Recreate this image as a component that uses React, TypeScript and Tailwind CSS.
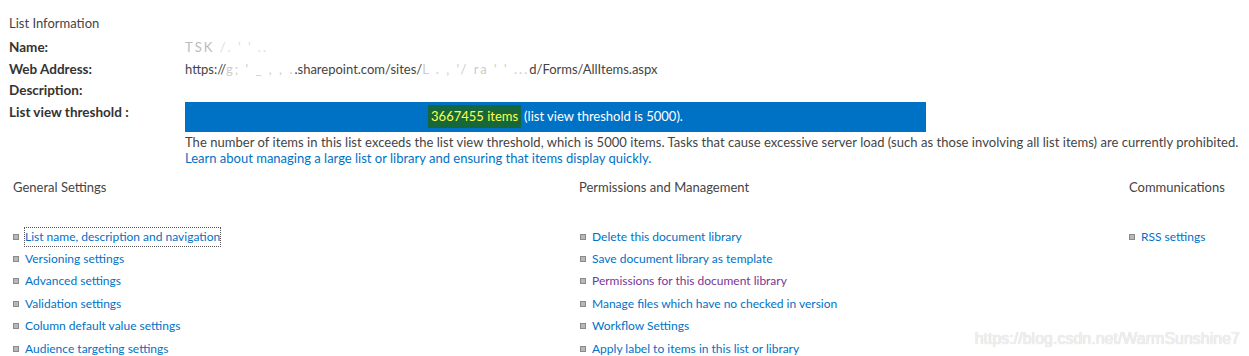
const font = { fontFamily: 'Lato, "Noto Sans", sans-serif' };

function Bullet() {
  return <span className="inline-block h-[6px] w-[6px] shrink-0 border border-[#8a8a8a] bg-[#b8b8b8]" />;
}

function LinkItem({ text, visited, focused }: { text: string; visited?: boolean; focused?: boolean }) {
  return (
    <li className="flex h-[22.4px] items-center gap-[6px] text-[12px]">
      <Bullet />
      <a
        className={
          (visited ? "text-[#7a3595] " : "text-[#0072c6] ") +
          (focused ? "outline-1 outline-dotted outline-[#555] " : "")
        }
      >
        {text}
      </a>
    </li>
  );
}

const general = [
  "List name, description and navigation",
  "Versioning settings",
  "Advanced settings",
  "Validation settings",
  "Column default value settings",
  "Audience targeting settings",
];

const perms = [
  "Delete this document library",
  "Save document library as template",
  "Permissions for this document library",
  "Manage files which have no checked in version",
  "Workflow Settings",
  "Apply label to items in this list or library",
];

export default function App() {
  return (
    <div className="relative h-[356px] w-[1249px] overflow-hidden bg-white text-[13px] text-[#444]" style={font}>
      {/* ===== list information ===== */}
      <div className="px-[9px] pt-[12px]">
        <div className="h-[25px] leading-[22px] text-[#444]">List Information</div>
        <div className="grid grid-cols-[176px_1fr] leading-[21.5px]">
          <div className="text-[13.5px] font-bold text-[#333]">Name:</div>
          <div className="text-[#bbb] tracking-[2px]">
            TSK <span className="text-[#ddd]">/. ' ' ..</span>
          </div>
          <div className="text-[13.5px] font-bold text-[#333]">Web Address:</div>
          <div className="text-[#444]">
            https://<span className="tracking-[2px] text-[#ccc]">g;  ' _ ,  , .</span>.sharepoint.com/sites/
            <span className="tracking-[2px] text-[#ccc]">L .  , '/ ra  '  ' ...</span>d/Forms/AllItems.aspx
          </div>
          <div className="text-[13.5px] font-bold text-[#333]">Description:</div>
          <div />
          <div className="text-[13.5px] font-bold text-[#333]">List view threshold :</div>
          <div>
            <div className="flex h-[30px] w-[741px] items-center justify-center bg-[#0072c6] text-white">
              <span className="bg-[#16683a] px-[3px] leading-[23px] text-[#ffff4d]">3667455 items</span>
              <span className="ml-[3px]">(list view threshold is 5000).</span>
            </div>
            <div className="mt-[2px] whitespace-nowrap leading-[16px] tracking-[0.04px] text-[#444]">
              The number of items in this list exceeds the list view threshold, which is 5000 items. Tasks that cause excessive server load (such as those involving all list items) are currently prohibited.
            </div>
            <a className="block leading-[16px] text-[#0072c6]">
              Learn about managing a large list or library and ensuring that items display quickly.
            </a>
          </div>
        </div>
      </div>

      {/* ===== settings columns ===== */}
      <div className="mt-[11px] flex pl-[13px]">
        <section className="w-[566px]">
          <h3 className="leading-[20px] text-[#444]">General Settings</h3>
          <ul className="mt-[29px]">
            {general.map((t, i) => (
              <LinkItem key={t} text={t} focused={i === 0} />
            ))}
          </ul>
        </section>
        <section className="w-[550px]">
          <h3 className="leading-[20px] text-[#444]">Permissions and Management</h3>
          <ul className="mt-[29px] pl-[1px]">
            {perms.map((t, i) => (
              <LinkItem key={t} text={t} visited={i === 2} />
            ))}
          </ul>
        </section>
        <section>
          <h3 className="leading-[20px] text-[#444]">Communications</h3>
          <ul className="mt-[29px]">
            <LinkItem text="RSS settings" />
          </ul>
        </section>
      </div>

      {/* watermark */}
      <div
        className="absolute right-[9px] top-[327px] text-[16px] text-[#f0f0f0] [text-shadow:0_0_1px_#c8c8c8]"
        style={{ fontFamily: '"Liberation Sans", Arial, sans-serif' }}
      >
        https://blog.csdn.net/WarmSunshine7
      </div>
    </div>
  );
}
